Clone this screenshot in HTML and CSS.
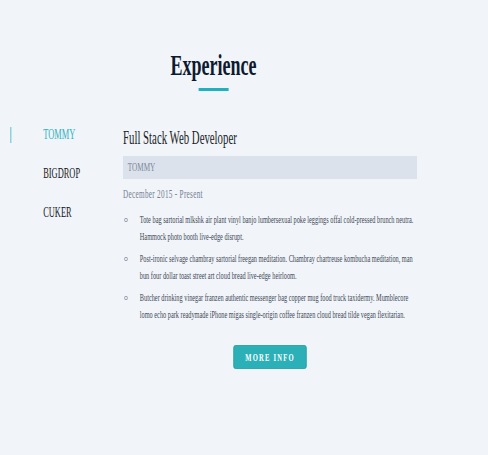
FILE: index.html
```html
<!DOCTYPE html>
<html lang="en">
<head>
    <meta charset="UTF-8">
    <meta name="viewport" content="width=device-width, initial-scale=1.0">
    <title>Experience</title>
    <link rel="stylesheet" href="styles.css">
</head>
<body>
    <div class="page">
        <header class="section-head">
            <h2>Experience</h2>
            <span class="underline"></span>
        </header>

        <div class="experience">
            <ul class="tabs">
                <li class="tab active">TOMMY</li>
                <li class="tab">BIGDROP</li>
                <li class="tab">CUKER</li>
            </ul>

            <div class="job">
                <h3>Full Stack Web Developer</h3>
                <div class="company">TOMMY</div>
                <p class="dates">December 2015 - Present</p>
                <ul class="duties">
                    <li>Tote bag sartorial mlkshk air plant vinyl banjo lumbersexual poke leggings offal cold-pressed brunch neutra. Hammock photo booth live-edge disrupt.</li>
                    <li>Post-ironic selvage chambray sartorial freegan meditation. Chambray chartreuse kombucha meditation, man bun four dollar toast street art cloud bread live-edge heirloom.</li>
                    <li>Butcher drinking vinegar franzen authentic messenger bag copper mug food truck taxidermy. Mumblecore lomo echo park readymade iPhone migas single-origin coffee franzen cloud bread tilde vegan flexitarian.</li>
                </ul>
                <div class="actions">
                    <button type="button" class="btn">MORE INFO</button>
                </div>
            </div>
        </div>
    </div>
</body>
</html>
```

FILE: styles.css
```css
html, body {
    margin: 0;
    height: 100%;
    overflow: hidden;
    background-color: #f1f4f8;
}
body {
    font-family: "Liberation Serif", "Times New Roman", serif;
    color: #1b2230;
}
/* the whole layout is drawn narrow, like a squeezed capture */
.page {
    width: 813px;
    transform: scaleX(0.6);
    transform-origin: 0 0;
}
.section-head {
    width: 712px;
    padding-top: 50px;
    text-align: center;
}
.section-head h2 {
    margin: 0;
    font-size: 30px;
    line-height: 30px;
    font-weight: bold;
    color: #0c1a30;
}
.underline {
    display: block;
    width: 50px;
    height: 3px;
    margin: 8px auto 0;
    background-color: #1fb1bd;
}
.experience {
    display: flex;
    margin-top: 36px;
}
.tabs {
    list-style: none;
    margin: 0 0 0 17px;
    padding: 0;
    width: 188px;
}
.tab {
    font-size: 14px;
    line-height: 16px;
    padding-left: 53px;
    margin-bottom: 23px;
    border-left: 2px solid transparent;
    color: #15171c;
}
.tab.active {
    color: #2fb3bf;
    border-left-color: #73cbd3;
}
.job {
    width: 490px;
}
.job h3 {
    margin: 0;
    font-size: 18px;
    line-height: 22px;
    font-weight: normal;
    color: #1a1f29;
}
.company {
    margin-top: 7px;
    height: 23px;
    line-height: 23px;
    padding-left: 8px;
    font-size: 12px;
    color: #7c8799;
    background-color: #dbe2eb;
}
.dates {
    margin: 7px 0 0;
    font-size: 12px;
    line-height: 16px;
    letter-spacing: 0.5px;
    color: #728096;
}
.duties {
    margin: 9px 0 0;
    padding: 0;
    list-style: none;
    font-size: 10.5px;
    line-height: 17px;
    color: #404856;
}
.duties li {
    display: flex;
    margin-bottom: 5px;
}
.duties li::before {
    content: "";
    flex: none;
    box-sizing: border-box;
    width: 6px;
    height: 4px;
    margin: 7px 20px 0 2px;
    border: 1px solid #8a94a3;
    border-radius: 50%;
}
.actions {
    margin-top: 22px;
    text-align: center;
}
.btn {
    width: 122px;
    height: 24px;
    padding: 0;
    font-family: "Liberation Serif", "Times New Roman", serif;
    font-size: 11px;
    font-weight: bold;
    letter-spacing: 2px;
    color: #ffffff;
    background-color: #2cb0b8;
    border: 1px solid #1e9aa3;
    border-radius: 3px;
    cursor: pointer;
}
.btn:hover {
    background-color: #26a0a8;
}
```
